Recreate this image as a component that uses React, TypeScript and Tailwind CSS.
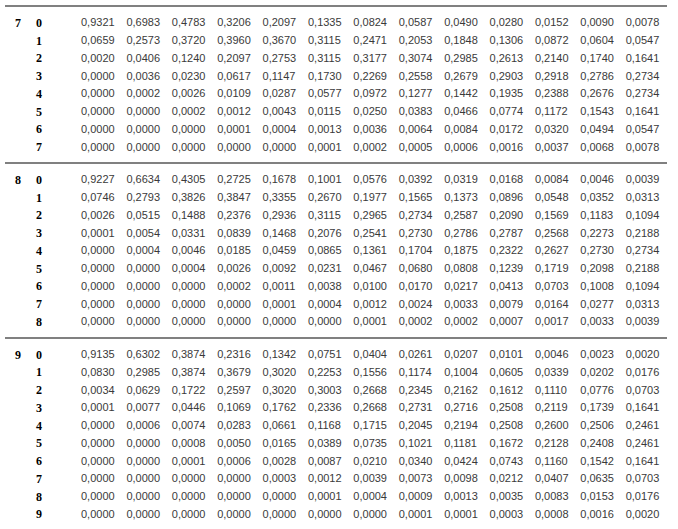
import React from "react";

const data: { n: number; rows: string[][] }[] = [
  {
    n: 7,
    rows: [
      ["0,9321","0,6983","0,4783","0,3206","0,2097","0,1335","0,0824","0,0587","0,0490","0,0280","0,0152","0,0090","0,0078"],
      ["0,0659","0,2573","0,3720","0,3960","0,3670","0,3115","0,2471","0,2053","0,1848","0,1306","0,0872","0,0604","0,0547"],
      ["0,0020","0,0406","0,1240","0,2097","0,2753","0,3115","0,3177","0,3074","0,2985","0,2613","0,2140","0,1740","0,1641"],
      ["0,0000","0,0036","0,0230","0,0617","0,1147","0,1730","0,2269","0,2558","0,2679","0,2903","0,2918","0,2786","0,2734"],
      ["0,0000","0,0002","0,0026","0,0109","0,0287","0,0577","0,0972","0,1277","0,1442","0,1935","0,2388","0,2676","0,2734"],
      ["0,0000","0,0000","0,0002","0,0012","0,0043","0,0115","0,0250","0,0383","0,0466","0,0774","0,1172","0,1543","0,1641"],
      ["0,0000","0,0000","0,0000","0,0001","0,0004","0,0013","0,0036","0,0064","0,0084","0,0172","0,0320","0,0494","0,0547"],
      ["0,0000","0,0000","0,0000","0,0000","0,0000","0,0001","0,0002","0,0005","0,0006","0,0016","0,0037","0,0068","0,0078"],
    ],
  },
  {
    n: 8,
    rows: [
      ["0,9227","0,6634","0,4305","0,2725","0,1678","0,1001","0,0576","0,0392","0,0319","0,0168","0,0084","0,0046","0,0039"],
      ["0,0746","0,2793","0,3826","0,3847","0,3355","0,2670","0,1977","0,1565","0,1373","0,0896","0,0548","0,0352","0,0313"],
      ["0,0026","0,0515","0,1488","0,2376","0,2936","0,3115","0,2965","0,2734","0,2587","0,2090","0,1569","0,1183","0,1094"],
      ["0,0001","0,0054","0,0331","0,0839","0,1468","0,2076","0,2541","0,2730","0,2786","0,2787","0,2568","0,2273","0,2188"],
      ["0,0000","0,0004","0,0046","0,0185","0,0459","0,0865","0,1361","0,1704","0,1875","0,2322","0,2627","0,2730","0,2734"],
      ["0,0000","0,0000","0,0004","0,0026","0,0092","0,0231","0,0467","0,0680","0,0808","0,1239","0,1719","0,2098","0,2188"],
      ["0,0000","0,0000","0,0000","0,0002","0,0011","0,0038","0,0100","0,0170","0,0217","0,0413","0,0703","0,1008","0,1094"],
      ["0,0000","0,0000","0,0000","0,0000","0,0001","0,0004","0,0012","0,0024","0,0033","0,0079","0,0164","0,0277","0,0313"],
      ["0,0000","0,0000","0,0000","0,0000","0,0000","0,0000","0,0001","0,0002","0,0002","0,0007","0,0017","0,0033","0,0039"],
    ],
  },
  {
    n: 9,
    rows: [
      ["0,9135","0,6302","0,3874","0,2316","0,1342","0,0751","0,0404","0,0261","0,0207","0,0101","0,0046","0,0023","0,0020"],
      ["0,0830","0,2985","0,3874","0,3679","0,3020","0,2253","0,1556","0,1174","0,1004","0,0605","0,0339","0,0202","0,0176"],
      ["0,0034","0,0629","0,1722","0,2597","0,3020","0,3003","0,2668","0,2345","0,2162","0,1612","0,1110","0,0776","0,0703"],
      ["0,0001","0,0077","0,0446","0,1069","0,1762","0,2336","0,2668","0,2731","0,2716","0,2508","0,2119","0,1739","0,1641"],
      ["0,0000","0,0006","0,0074","0,0283","0,0661","0,1168","0,1715","0,2045","0,2194","0,2508","0,2600","0,2506","0,2461"],
      ["0,0000","0,0000","0,0008","0,0050","0,0165","0,0389","0,0735","0,1021","0,1181","0,1672","0,2128","0,2408","0,2461"],
      ["0,0000","0,0000","0,0001","0,0006","0,0028","0,0087","0,0210","0,0340","0,0424","0,0743","0,1160","0,1542","0,1641"],
      ["0,0000","0,0000","0,0000","0,0000","0,0003","0,0012","0,0039","0,0073","0,0098","0,0212","0,0407","0,0635","0,0703"],
      ["0,0000","0,0000","0,0000","0,0000","0,0000","0,0001","0,0004","0,0009","0,0013","0,0035","0,0083","0,0153","0,0176"],
      ["0,0000","0,0000","0,0000","0,0000","0,0000","0,0000","0,0000","0,0001","0,0001","0,0003","0,0008","0,0016","0,0020"],
    ],
  },
];

export default function App() {
  return (
    <div className="w-[678px] h-[529px] bg-white overflow-hidden pt-[5px] pl-[5px]">
      <div className="w-[662px]">
        {data.map((sec) => (
          <div key={sec.n} className="flex flex-col">
            <div className="h-[2px] bg-[#808080]" />
            <div className="pt-[7px] pb-[6px]">
              {sec.rows.map((row, k) => (
                <div key={k} className="flex items-center h-[17.75px] w-[680px]">
                  <div className="w-[31px] shrink-0 pl-[10px] font-['Liberation_Serif',serif] font-bold text-[12px] text-black leading-none">
                    {k === 0 ? sec.n : ""}
                  </div>
                  <div className="w-[45px] shrink-0 font-['Liberation_Serif',serif] font-bold text-[12px] text-black leading-none">
                    {k}
                  </div>
                  {row.map((v, i) => (
                    <div
                      key={i}
                      className="w-[45.4px] shrink-0 font-['Liberation_Sans',Arial,sans-serif] text-[11px] text-[#3a3a3a] leading-none"
                    >
                      {v}
                    </div>
                  ))}
                </div>
              ))}
            </div>
          </div>
        ))}
      </div>
    </div>
  );
}
